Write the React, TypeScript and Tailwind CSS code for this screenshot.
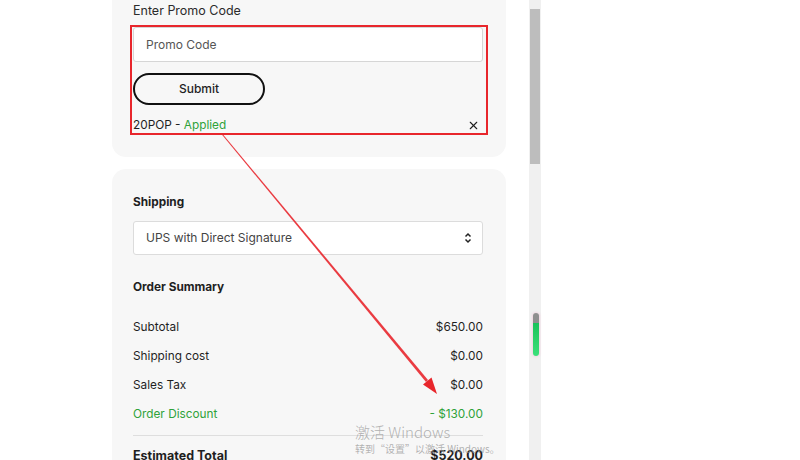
import { X } from "lucide-react";

const rows = [
  { label: "Subtotal", value: "$650.00" },
  { label: "Shipping cost", value: "$0.00" },
  { label: "Sales Tax", value: "$0.00" },
];

export default function App() {
  return (
    <div
      className="relative h-[460px] w-[800px] overflow-hidden bg-white text-[11.8px] text-[#1f1f1f]"
      style={{ fontFamily: "Inter, 'Noto Sans', sans-serif" }}
    >
      <div className="flex h-full">
        {/* Checkout column */}
        <div className="ml-[112px] flex w-[394px] flex-col gap-[12px]">
          {/* Promo code card */}
          <div className="rounded-b-[14px] bg-[#f7f7f7] pb-[24px] pl-[21px] pr-[23px] pt-[3px]">
            <p className="text-[12.5px] leading-[16px] text-[#2b2b2b]">Enter Promo Code</p>
            <input
              type="text"
              placeholder="Promo Code"
              className="mt-[8px] h-[35px] w-full rounded-[3px] border border-[#d6d6d6] bg-white px-[12px] text-[12px] placeholder:text-[#555]"
            />
            <button className="mt-[11px] h-[32px] w-[132px] rounded-full border-2 border-[#111] text-[12px] font-medium">
              Submit
            </button>
            <div className="mt-[12px] flex items-center justify-between leading-[16px]">
              <p>
                20POP - <span className="text-[#2fa23a]">Applied</span>
              </p>
              <X className="mr-[3px] h-[13px] w-[13px]" strokeWidth={2} />
            </div>
          </div>

          {/* Shipping + summary card */}
          <div className="flex-1 rounded-t-[14px] bg-[#f7f7f7] pl-[21px] pr-[23px] pt-[25px]">
            <p className="font-bold leading-[16px]">Shipping</p>
            <div className="mt-[11px] flex h-[34px] items-center justify-between rounded-[3px] border border-[#dcdcdc] bg-white pl-[12px] pr-[9px] text-[12px] text-[#444]">
              <span>UPS with Direct Signature</span>
              <svg width="10" height="14" viewBox="0 0 10 14" fill="none" stroke="#222" strokeWidth="1.5">
                <path d="M2.5 5.5l2.5-2.5 2.5 2.5" />
                <path d="M2.5 8.5l2.5 2.5 2.5-2.5" />
              </svg>
            </div>
            <p className="mt-[24px] font-bold leading-[16px]">Order Summary</p>
            <div className="mt-[24px] flex flex-col gap-[13px]">
              {rows.map((r) => (
                <div key={r.label} className="flex justify-between leading-[16px]">
                  <span>{r.label}</span>
                  <span>{r.value}</span>
                </div>
              ))}
              <div className="flex justify-between leading-[16px] text-[#2fa23a]">
                <span>Order Discount</span>
                <span>- $130.00</span>
              </div>
            </div>
            <div className="mt-[13px] h-px bg-[#dedede]" />
            <div className="mt-[12px] flex justify-between text-[12.5px] font-bold leading-[16px]">
              <span>Estimated Total</span>
              <span>$520.00</span>
            </div>
          </div>
        </div>

        {/* Scrollbar */}
        <div className="ml-[23px] h-full w-[12px] bg-[#f0f0f0] pt-[9px]">
          <div className="mx-[1px] h-[155px] bg-[#bdbdbd]" />
        </div>
      </div>

      {/* Floating widget over scrollbar */}
      <div className="absolute left-[533px] top-[313px] flex h-[43px] w-[6px] flex-col overflow-hidden rounded-full shadow-[0_0_3px_#f3b6d0]">
        <div className="h-[10px] bg-[#8f8f8f]" />
        <div className="flex-1 bg-gradient-to-b from-[#19c35a] to-[#3be07a]" />
      </div>

      {/* Annotation */}
      <div className="pointer-events-none absolute left-[130px] top-[25px] h-[110px] w-[358px] border-2 border-[#e8262c]" />
      <svg className="pointer-events-none absolute left-0 top-0" width="800" height="460">
        <polygon points="221.6,134.3 222.4,133.7 428,380 426,382" fill="#e8262c" opacity="0.9" />
        <polygon points="437,394 423,384.5 431.5,377.5" fill="#e8262c" />
      </svg>

      {/* Windows watermark */}
      <div
        className="pointer-events-none absolute left-[355px] top-[422px] text-[#9a9a9a]/75"
        style={{ fontFamily: "'Noto Sans CJK SC', 'Noto Sans', sans-serif" }}
      >
        <p className="text-[15px] font-light leading-[20px]">激活 Windows</p>
        <p className="text-[10px] leading-[13px]">转到“设置”以激活 Windows。</p>
      </div>
    </div>
  );
}
